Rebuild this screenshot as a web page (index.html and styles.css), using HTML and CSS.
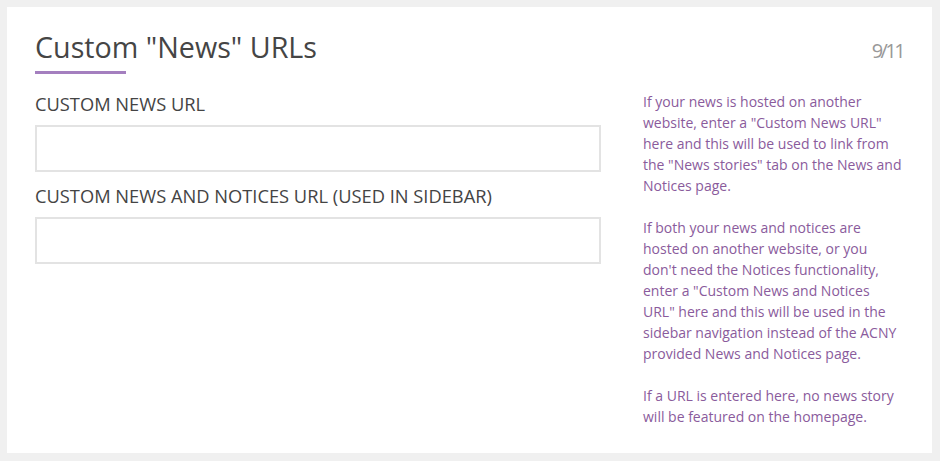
FILE: index.html
```html
<!DOCTYPE html>
<html>
<head>
<meta charset="utf-8">
<link rel="stylesheet" href="styles.css">
</head>
<body>
<div class="card">
  <div class="header">
    <h1 class="title">Custom "News" URLs</h1>
    <span class="counter">9/11</span>
  </div>
  <div class="rule"></div>
  <div class="body">
    <div class="fields">
      <label class="label">CUSTOM NEWS URL</label>
      <input class="input" type="text">
      <label class="label">CUSTOM NEWS AND NOTICES URL (USED IN SIDEBAR)</label>
      <input class="input" type="text">
    </div>
    <div class="help">
      <p>If your news is hosted on another website, enter a "Custom News URL" here and this will be used to link from the "News stories" tab on the News and Notices page.</p>
      <p>If both your news and notices are hosted on another website, or you don't need the Notices functionality, enter a "Custom News and Notices URL" here and this will be used in the sidebar navigation instead of the ACNY provided News and Notices page.</p>
      <p>If a URL is entered here, no news story will be featured on the homepage.</p>
    </div>
  </div>
</div>
</body>
</html>
```

FILE: styles.css
```css
html, body {
  margin: 0;
  padding: 0;
  background: #f0f0f0;
  font-family: "Open Sans", "Noto Sans", sans-serif;
}
.card {
  box-sizing: border-box;
  margin: 7px 0 0 7px;
  width: 925px;
  height: 446px;
  background: #ffffff;
  padding: 19px 29px 0 28px;
}
.header {
  display: flex;
  justify-content: space-between;
  align-items: baseline;
}
.title {
  margin: 0;
  font-size: 28.7px;
  line-height: 41px;
  font-weight: 400;
  color: #454545;
}
.counter {
  font-size: 20px;
  letter-spacing: -2.6px;
  color: #999999;
}
.rule {
  width: 91px;
  height: 3px;
  background: #a47fbf;
  margin-top: 4px;
}
.body {
  display: flex;
  gap: 42px;
  margin-top: 17px;
}
.fields {
  width: 566px;
  display: flex;
  flex-direction: column;
}
.label {
  display: block;
  font-size: 18.3px;
  line-height: 25px;
  color: #444444;
  margin-bottom: 9px;
}
.input {
  box-sizing: border-box;
  height: 47px;
  width: 566px;
  border: 2px solid #e3e3e3;
  background: #fff;
  margin: 0 0 11px 0;
  padding: 0 10px;
  outline: none;
}
.help {
  width: 262px;
  color: #8a5b9c;
  font-size: 14px;
  line-height: 21px;
}
.help p {
  margin: 0 0 21px 0;
}
```
